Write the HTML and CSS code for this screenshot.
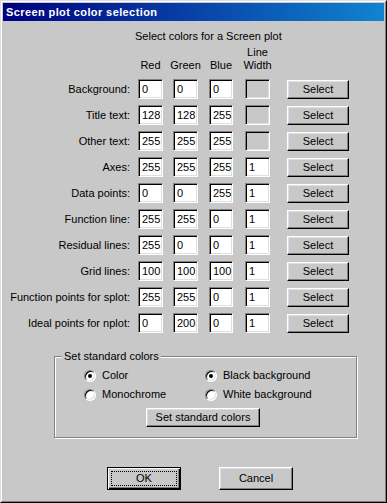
FILE: index.html
```html
<!DOCTYPE html>
<html>
<head>
<meta charset="utf-8">
<title>Screen plot color selection</title>
<link rel="stylesheet" href="styles.css">
</head>
<body>
<div class="window">
  <div class="frame">
    <div class="titlebar"><span class="title">Screen plot color selection</span></div>
    <div class="content">
      <div class="intro">Select colors for a Screen plot</div>
      <div class="table">
        <div></div>
        <div class="colhead">Red</div>
        <div class="colhead">Green</div>
        <div class="colhead blue">Blue</div>
        <div class="colhead">Line<br>Width</div>
        <div></div>

        <div class="label">Background:</div>
        <div class="field">0</div><div class="field">0</div><div class="field blue">0</div>
        <div class="field disabled"></div><div class="btn select">Select</div>

        <div class="label">Title text:</div>
        <div class="field">128</div><div class="field">128</div><div class="field blue">255</div>
        <div class="field disabled"></div><div class="btn select">Select</div>

        <div class="label">Other text:</div>
        <div class="field">255</div><div class="field">255</div><div class="field blue">255</div>
        <div class="field disabled"></div><div class="btn select">Select</div>

        <div class="label">Axes:</div>
        <div class="field">255</div><div class="field">255</div><div class="field blue">255</div>
        <div class="field">1</div><div class="btn select">Select</div>

        <div class="label">Data points:</div>
        <div class="field">0</div><div class="field">0</div><div class="field blue">255</div>
        <div class="field">1</div><div class="btn select">Select</div>

        <div class="label">Function line:</div>
        <div class="field">255</div><div class="field">255</div><div class="field blue">0</div>
        <div class="field">1</div><div class="btn select">Select</div>

        <div class="label">Residual lines:</div>
        <div class="field">255</div><div class="field">0</div><div class="field blue">0</div>
        <div class="field">1</div><div class="btn select">Select</div>

        <div class="label">Grid lines:</div>
        <div class="field">100</div><div class="field">100</div><div class="field blue">100</div>
        <div class="field">1</div><div class="btn select">Select</div>

        <div class="label">Function points for splot:</div>
        <div class="field">255</div><div class="field">255</div><div class="field blue">0</div>
        <div class="field">1</div><div class="btn select">Select</div>

        <div class="label">Ideal points for nplot:</div>
        <div class="field">0</div><div class="field">200</div><div class="field blue">0</div>
        <div class="field">1</div><div class="btn select">Select</div>
      </div>

      <div class="group">
        <span class="legend">Set standard colors</span>
        <div class="radios">
          <div class="option"><span class="radio checked"></span><span>Color</span></div>
          <div class="option"><span class="radio checked"></span><span>Black background</span></div>
          <div class="option"><span class="radio"></span><span>Monochrome</span></div>
          <div class="option"><span class="radio"></span><span>White background</span></div>
        </div>
        <div class="btn std">Set standard colors</div>
      </div>

      <div class="actions">
        <div class="btn ok"><span class="focus">OK</span></div>
        <div class="btn cancel">Cancel</div>
      </div>
    </div>
  </div>
</div>
</body>
</html>
```
FILE: styles.css
```css
html, body {
  margin: 0;
  padding: 0;
  background: #c8c8c8;
}

.window {
  width: 387px;
  height: 503px;
  box-sizing: border-box;
  border: 1px solid;
  border-color: #dfdfdf #000 #000 #dfdfdf;
  background: #c8c8c8;
  font-family: "Liberation Sans", Arial, sans-serif;
  font-size: 11px;
  line-height: 13px;
  color: #000;
}

.frame {
  height: 100%;
  box-sizing: border-box;
  border: 1px solid;
  border-color: #fff #808080 #808080 #fff;
  padding: 1px;
}

.titlebar {
  height: 18px;
  background: linear-gradient(to right, #000080, #1084d0);
  display: flex;
  align-items: center;
  padding-left: 3px;
}

.title {
  color: #fff;
  font-weight: bold;
  font-size: 11px;
  letter-spacing: 0.4px;
}

.content {
  padding-top: 9px;
}

.intro {
  padding-left: 132px;
  margin-bottom: 3px;
}

.table {
  display: grid;
  grid-template-columns: 135px 35px 36px 36px 42px 62px;
  grid-auto-rows: 20px;
  grid-template-rows: 27px;
  row-gap: 6px;
}

.colhead {
  width: 25px;
  display: flex;
  justify-content: center;
  align-items: flex-end;
  text-align: center;
  padding-bottom: 1px;
  box-sizing: border-box;
}

.colhead.blue {
  width: 24px;
}

.label {
  text-align: right;
  padding-right: 8px;
  align-self: center;
  white-space: nowrap;
}

.field {
  width: 25px;
  height: 20px;
  box-sizing: border-box;
  background: #fff;
  border: 1px solid;
  border-color: #808080 #fff #fff #808080;
  box-shadow: inset 1px 1px 0 #000, inset -1px -1px 0 #dfdfdf;
  padding: 2px 0 0 3px;
  line-height: 15px;
}

.field.blue {
  width: 24px;
}

.field.disabled {
  background: #c8c8c8;
}

.btn {
  box-sizing: border-box;
  background: #c8c8c8;
  border: 1px solid;
  border-color: #fff #000 #000 #fff;
  box-shadow: inset -1px -1px 0 #808080, inset 1px 1px 0 #dfdfdf;
  display: flex;
  align-items: center;
  justify-content: center;
  white-space: nowrap;
}

.select {
  width: 62px;
  height: 19px;
  align-self: end;
}

.group {
  position: relative;
  margin: 23px 0 0 51px;
  width: 303px;
  height: 82px;
  box-sizing: border-box;
  border: 1px solid #808080;
  box-shadow: inset 1px 1px 0 #fff, 1px 1px 0 #fff;
  padding-top: 12px;
}

.legend {
  position: absolute;
  top: -7px;
  left: 7px;
  padding: 0 2px;
  background: #c8c8c8;
}

.radios {
  display: grid;
  grid-template-columns: 121px auto;
  grid-auto-rows: 13px;
  row-gap: 6px;
  padding-left: 29px;
}

.option {
  display: flex;
  align-items: center;
  gap: 6px;
}

.radio {
  width: 12px;
  height: 12px;
  box-sizing: border-box;
  border-radius: 50%;
  background: #fff;
  border: 1px solid;
  border-color: #808080 #fff #fff #808080;
  box-shadow: inset 1px 1px 0 #000, inset -1px -1px 0 #dfdfdf;
  display: flex;
  align-items: center;
  justify-content: center;
}

.radio.checked::after {
  content: "";
  width: 4px;
  height: 4px;
  border-radius: 50%;
  background: #000;
}

.std {
  width: 114px;
  height: 19px;
  margin: 7px 0 0 91px;
}

.actions {
  display: flex;
  gap: 38px;
  margin-top: 29px;
  padding-left: 104px;
}

.ok, .cancel {
  width: 74px;
  height: 23px;
}

.ok {
  border: 1px solid #000;
  box-shadow: inset 1px 1px 0 #fff, inset -1px -1px 0 #000, inset -2px -2px 0 #808080;
  padding: 3px;
  align-items: stretch;
}

.focus {
  flex: 1;
  border: 1px dotted #000;
  display: flex;
  align-items: center;
  justify-content: center;
}
```
